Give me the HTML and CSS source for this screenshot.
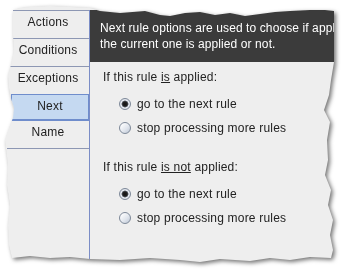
FILE: index.html
```html
<!DOCTYPE html>
<html>
<head>
<meta charset="utf-8">
<link rel="stylesheet" href="styles.css">
</head>
<body>
<div class="shadow">
  <div class="paper">
    <div class="window">
      <div class="tabs">
        <div class="tab first">Actions</div>
        <div class="tab">Conditions</div>
        <div class="tab plain">Exceptions</div>
        <div class="tab selected">Next</div>
        <div class="tab">Name</div>
      </div>
      <div class="content">
        <div class="header">
          <div class="line">Next rule options are used to choose if appl</div>
          <div class="line">the current one is applied or not.</div>
        </div>
        <div class="body">
          <div class="group-label">If this rule <u>is</u> applied:</div>
          <div class="option"><span class="radio checked"></span>go to the next rule</div>
          <div class="option"><span class="radio"></span>stop processing more rules</div>
          <div class="group-label second">If this rule <u>is not</u> applied:</div>
          <div class="option"><span class="radio checked"></span>go to the next rule</div>
          <div class="option"><span class="radio"></span>stop processing more rules</div>
        </div>
      </div>
    </div>
  </div>
</div>
</body>
</html>
```

FILE: styles.css
```css
html, body {
  margin: 0;
  padding: 0;
  background: #ffffff;
}
body {
  width: 345px;
  height: 277px;
  overflow: hidden;
  font-family: "Liberation Sans", Arial, sans-serif;
  font-size: 12px;
  letter-spacing: 0.2px;
  color: #222222;
}
.shadow {
  width: 345px;
  height: 277px;
  filter: drop-shadow(2px 2px 2px rgba(0, 0, 0, 0.55));
}
.paper {
  width: 345px;
  height: 277px;
  box-sizing: border-box;
  padding: 10px 0 0 7px;
  background: #eeeeee;
  clip-path: polygon(
    13px 10px, 20px 8px, 30px 7px, 50px 6px, 70px 7px, 90px 8px, 100px 11px, 120px 13px,
    145px 11px, 160px 15px, 170px 16px, 185px 13px, 200px 12px, 215px 15px, 230px 13px,
    245px 16px, 260px 14px, 275px 12px, 290px 11px, 310px 10px, 325px 10px, 334px 11px,
    334px 30px, 334px 62px, 331px 80px, 329px 95px, 324px 110px, 330px 122px, 327px 140px,
    328px 160px, 325px 175px, 331px 190px, 328px 205px, 333px 220px, 330px 235px,
    333px 250px, 331px 258px,
    310px 257px, 290px 260px, 270px 258px, 250px 261px, 220px 259px, 200px 262px,
    180px 260px, 150px 258px, 120px 260px, 90px 259px, 70px 257px, 50px 258px,
    30px 256px, 12px 258px,
    9px 245px, 8px 225px, 10px 205px, 7px 185px, 8px 165px, 5px 140px, 9px 128px,
    13px 118px, 14px 108px, 11px 98px, 9px 88px, 8px 75px, 11px 65px, 14px 50px,
    13px 35px, 13px 20px
  );
}
.window {
  display: flex;
  height: 252px;
}
.tabs {
  flex: none;
  width: 82px;
  border-right: 1px solid #7b8dc6;
  display: flex;
  flex-direction: column;
}
.tab {
  height: 27px;
  line-height: 23px;
  text-align: center;
  border-bottom: 1px solid #8d97b3;
}
.tab.first {
  border-top: 1px solid #8d97b3;
}
.tab.plain {
  border-bottom: none;
}
.tab.selected {
  height: 24px;
  line-height: 22px;
  margin-left: 4px;
  background: #c5d9f1;
  border: 1px solid #6f8dcc;
  border-bottom: 2px solid #6f8dcc;
}
.content {
  flex: 1;
  min-width: 0;
  display: flex;
  flex-direction: column;
}
.header {
  background: #3b3b3b;
  color: #ffffff;
  padding: 10px 0 10px 10px;
  line-height: 16px;
  letter-spacing: 0.1px;
}
.line {
  white-space: nowrap;
}
.body {
  padding: 7px 0 0 13px;
  display: flex;
  flex-direction: column;
}
.group-label {
  line-height: 16px;
  margin-bottom: 7px;
}
.group-label.second {
  margin-top: 19px;
}
.option {
  height: 24px;
  display: flex;
  align-items: center;
  padding-left: 16px;
}
.radio {
  width: 10px;
  height: 10px;
  border-radius: 50%;
  border: 1px solid #7d8898;
  background: linear-gradient(135deg, #ffffff 10%, #dfe4ec 60%, #bcc6d4 100%);
  margin-right: 6px;
  flex: none;
}
.radio.checked {
  background: radial-gradient(circle at 50% 50%, #111111 0, #222222 2.3px, #6b7380 3.2px, #e8ecf2 3.8px, #c8d0dc 100%);
}
```
